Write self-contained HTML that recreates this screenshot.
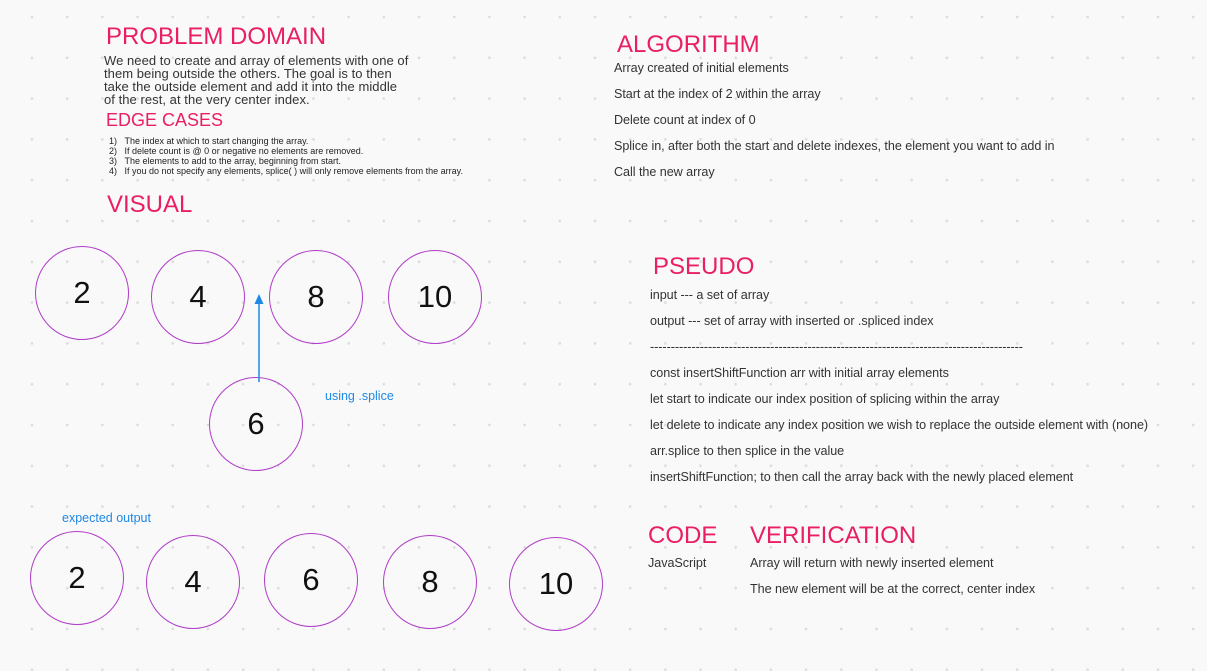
<!DOCTYPE html><html><head><style>
body{margin:0;width:1207px;height:671px;overflow:hidden;background-color:#f9f9f9;
background-image:radial-gradient(circle,#dcdcdc 1.2px,transparent 1.5px);background-size:35.2px 40.8px;background-position:14.4px -3.4px;
font-family:"Liberation Sans",sans-serif;color:#333;position:relative}
.a{position:absolute;white-space:nowrap}
.h{color:#e91e63;font-size:24px}
.t{font-size:12.6px;letter-spacing:-0.05px}
.c{position:absolute;width:94px;height:94px;border:1px solid #b03cc8;border-radius:50%;box-sizing:border-box;display:flex;align-items:center;justify-content:center;font-size:31px;color:#111}
.b{color:#1e88e5;font-size:12.5px}
</style></head><body>
<div class="a h" style="left:106px;top:23px">PROBLEM DOMAIN</div>
<div class="a" style="left:104px;top:54px;font-size:13px;line-height:13px;letter-spacing:0.05px">We need to create and array of elements with one of<br>them being outside the others. The goal is to then<br>take the outside element and add it into the middle<br>of the rest, at the very center index.</div>
<div class="a" style="left:106px;top:110px;color:#e91e63;font-size:18px">EDGE CASES</div>
<div class="a" style="left:109px;top:136px;font-size:9px;line-height:10px;color:#222">1)&nbsp;&nbsp;&nbsp;The index at which to start changing the array.<br>2)&nbsp;&nbsp;&nbsp;If delete count is @ 0 or negative no elements are removed.<br>3)&nbsp;&nbsp;&nbsp;The elements to add to the array, beginning from start.<br>4)&nbsp;&nbsp;&nbsp;If you do not specify any elements, splice( ) will only remove elements from the array.</div>
<div class="a h" style="left:107px;top:191px">VISUAL</div>

<div class="a h" style="left:617px;top:31px">ALGORITHM</div>
<div class="a t" style="left:614px;top:55px;line-height:26px">Array created of initial elements<br>Start at the index of 2 within the array<br>Delete count at index of 0<br>Splice in, after both the start and delete indexes, the element you want to add in<br>Call the new array</div>

<div class="a h" style="left:653px;top:253px">PSEUDO</div>
<div class="a t" style="left:650px;top:282px;line-height:26px">input --- a set of array<br>output --- set of array with inserted or .spliced index<br>------------------------------------------------------------------------------------------<br>const insertShiftFunction arr with initial array elements<br>let start to indicate our index position of splicing within the array<br>let delete to indicate any index position we wish to replace the outside element with (none)<br>arr.splice to then splice in the value<br>insertShiftFunction; to then call the array back with the newly placed element</div>

<div class="a h" style="left:648px;top:522px">CODE</div>
<div class="a h" style="left:750px;top:522px">VERIFICATION</div>
<div class="a t" style="left:648px;top:556px">JavaScript</div>
<div class="a t" style="left:750px;top:550px;line-height:26px">Array will return with newly inserted element<br>The new element will be at the correct, center index</div>

<div class="c" style="left:35px;top:246px">2</div>
<div class="c" style="left:151px;top:250px">4</div>
<div class="c" style="left:269px;top:250px">8</div>
<div class="c" style="left:388px;top:250px">10</div>
<div class="c" style="left:209px;top:377px">6</div>
<svg class="a" style="left:250px;top:290px" width="20" height="95"><line x1="9" y1="92" x2="9" y2="10" stroke="#1e88e5" stroke-width="1.5"/><path d="M4.5 14 L9 4 L13.5 14 Z" fill="#1e88e5"/></svg>
<div class="a b" style="left:325px;top:389px">using .splice</div>
<div class="a b" style="left:62px;top:511px">expected output</div>
<div class="c" style="left:30px;top:531px">2</div>
<div class="c" style="left:146px;top:535px">4</div>
<div class="c" style="left:264px;top:533px">6</div>
<div class="c" style="left:383px;top:535px">8</div>
<div class="c" style="left:509px;top:537px">10</div>
</body></html>
